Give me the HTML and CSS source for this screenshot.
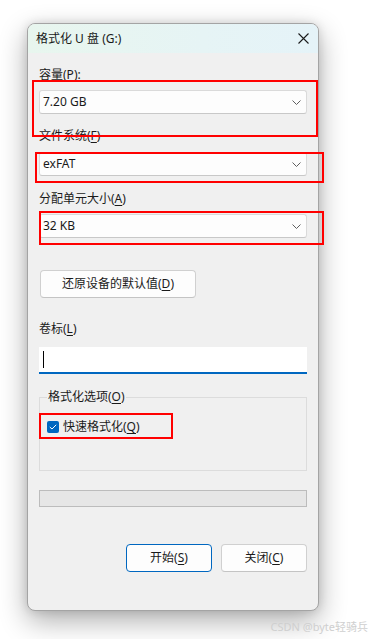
FILE: index.html
```html
<!DOCTYPE html>
<html lang="zh-CN">
<head>
<meta charset="utf-8">
<title>格式化 U 盘 (G:)</title>
<link rel="stylesheet" href="styles.css">
</head>
<body>
<div class="window">
  <div class="titlebar">
    <span class="title">格式化 U 盘 (G:)</span>
    <svg class="close" width="11" height="11" viewBox="0 0 11 11"><path d="M0.5 0.5 L10.5 10.5 M10.5 0.5 L0.5 10.5" stroke="#1c1c1c" stroke-width="1.1" fill="none"/></svg>
  </div>
  <div class="content">
    <div class="label l1">容量(<u>P</u>):</div>
    <div class="select s1"><span>7.20 GB</span><svg width="9" height="5" viewBox="0 0 9 5"><path d="M0.5 0.5 L4.5 4.5 L8.5 0.5" stroke="#5f5f5f" stroke-width="1" fill="none"/></svg></div>
    <div class="label l2">文件系统(<u>F</u>)</div>
    <div class="select s2"><span>exFAT</span><svg width="9" height="5" viewBox="0 0 9 5"><path d="M0.5 0.5 L4.5 4.5 L8.5 0.5" stroke="#5f5f5f" stroke-width="1" fill="none"/></svg></div>
    <div class="label l3">分配单元大小(<u>A</u>)</div>
    <div class="select s3"><span>32 KB</span><svg width="9" height="5" viewBox="0 0 9 5"><path d="M0.5 0.5 L4.5 4.5 L8.5 0.5" stroke="#5f5f5f" stroke-width="1" fill="none"/></svg></div>
    <div class="btn restore">还原设备的默认值(<u>D</u>)</div>
    <div class="label l4">卷标(<u>L</u>)</div>
    <div class="input"><span class="caret"></span></div>
    <fieldset class="group">
      <legend>格式化选项(<u>O</u>)</legend>
      <div class="check-row">
        <span class="checkbox"><svg width="8" height="6" viewBox="0 0 8 6"><path d="M0.8 3 L3 5 L7.2 0.8" stroke="#fff" stroke-width="1" fill="none"/></svg></span>
        <span>快速格式化(<u>Q</u>)</span>
      </div>
    </fieldset>
    <div class="progress"></div>
    <div class="actions">
      <div class="btn primary">开始(<u>S</u>)</div>
      <div class="btn">关闭(<u>C</u>)</div>
    </div>
  </div>
</div>
<div class="watermark">CSDN @byte轻骑兵</div>

<div class="mark m1"></div>
<div class="mark m2"></div>
<div class="mark m3"></div>
<div class="mark m4"></div>
</body>
</html>
```

FILE: styles.css
```css
html, body {
  margin: 0;
  padding: 0;
  background: #ffffff;
}
body {
  font-family: "Noto Sans", "Noto Sans CJK SC", sans-serif;
  font-size: 12px;
  color: #1a1a1a;
  position: relative;
  width: 371px;
  height: 639px;
  overflow: hidden;
  padding-top: 23px;
  box-sizing: border-box;
}
u {
  text-decoration: underline;
  text-underline-offset: 2px;
}
.window {
  margin-left: 27px;
  width: 292px;
  height: 588px;
  box-sizing: border-box;
  border: 1px solid #a4a4a4;
  border-radius: 8px;
  background: #f0f0f0;
  box-shadow: 0 10px 28px rgba(0, 0, 0, 0.32), 0 0 10px rgba(0,0,0,0.12);
  overflow: hidden;
  display: flex;
  flex-direction: column;
}
.titlebar {
  height: 29px;
  background: linear-gradient(90deg, #e8f6ee 0%, #e6f4f5 60%, #e5f3f8 100%);
  display: flex;
  align-items: center;
  justify-content: space-between;
  padding: 0 9px 0 8px;
  flex-shrink: 0;
}
.title {
  font-size: 12px;
  line-height: 16px;
  color: #1a1a1a;
}
.close {
  display: block;
}
.content {
  padding: 0 11px;
  display: flex;
  flex-direction: column;
  align-items: stretch;
}
.label {
  line-height: 16px;
  height: 16px;
}
.l1 { margin-top: 14px; }
.l2 { margin-top: 14px; }
.l3 { margin-top: 15px; }
.l4 { margin-top: 23px; }
.select {
  height: 24px;
  box-sizing: border-box;
  background: #fdfdfd;
  border: 1px solid #dadada;
  border-bottom-color: #c8c8c8;
  border-radius: 3px;
  display: flex;
  align-items: center;
  justify-content: space-between;
  padding: 0 5px 0 3px;
  line-height: 16px;
}
.select svg { display: block; }
.s1 { margin-top: 7px; }
.s2 { margin-top: 8px; }
.s3 { margin-top: 7px; }
.btn {
  height: 28px;
  box-sizing: border-box;
  background: #fdfdfd;
  border: 1px solid #d0d0d0;
  border-bottom-color: #c4c4c4;
  border-radius: 4px;
  display: flex;
  align-items: center;
  justify-content: center;
  line-height: 16px;
}
.restore {
  margin-top: 32px;
  margin-left: 1px;
  width: 156px;
}
.input {
  margin-top: 10px;
  height: 27px;
  box-sizing: border-box;
  background: #ffffff;
  border-bottom: 2px solid #0067c0;
  display: flex;
  align-items: center;
  padding-left: 4px;
}
.caret {
  display: block;
  width: 1px;
  height: 17px;
  background: #000;
}
.group {
  margin: 15px 0 0 0;
  border: 1px solid #dcdcdc;
  padding: 14px 8px 35px 7px;
  min-width: 0;
}
.group legend {
  padding: 0 1px;
  line-height: 16px;
  color: #1a1a1a;
}
.check-row {
  display: flex;
  align-items: center;
  gap: 4px;
  line-height: 16px;
}
.checkbox {
  width: 12px;
  height: 12px;
  border-radius: 2px;
  background: #0067c0;
  display: flex;
  align-items: center;
  justify-content: center;
}
.checkbox svg { display: block; }
.progress {
  margin-top: 19px;
  height: 17px;
  box-sizing: border-box;
  background: #e6e6e6;
  border: 1px solid #bcbcbc;
}
.actions {
  margin-top: 37px;
  display: flex;
  justify-content: flex-end;
  gap: 9px;
}
.actions .btn {
  width: 86px;
}
.btn.primary {
  border: 1px solid #0067c0;
}
.watermark {
  margin-top: 9px;
  text-align: right;
  padding-right: 3px;
  font-family: "Noto Sans", "Noto Sans CJK SC", sans-serif;
  font-size: 11px;
  line-height: 14px;
  color: #cfcfcf;
}
.mark {
  position: absolute;
  border: 2px solid #ff0000;
  box-sizing: border-box;
}
.m1 { left: 32px; top: 80px; width: 286px; height: 57px; }
.m2 { left: 35px; top: 152px; width: 289px; height: 31px; }
.m3 { left: 39px; top: 211px; width: 285px; height: 34px; }
.m4 { left: 39px; top: 413px; width: 134px; height: 26px; }
```
